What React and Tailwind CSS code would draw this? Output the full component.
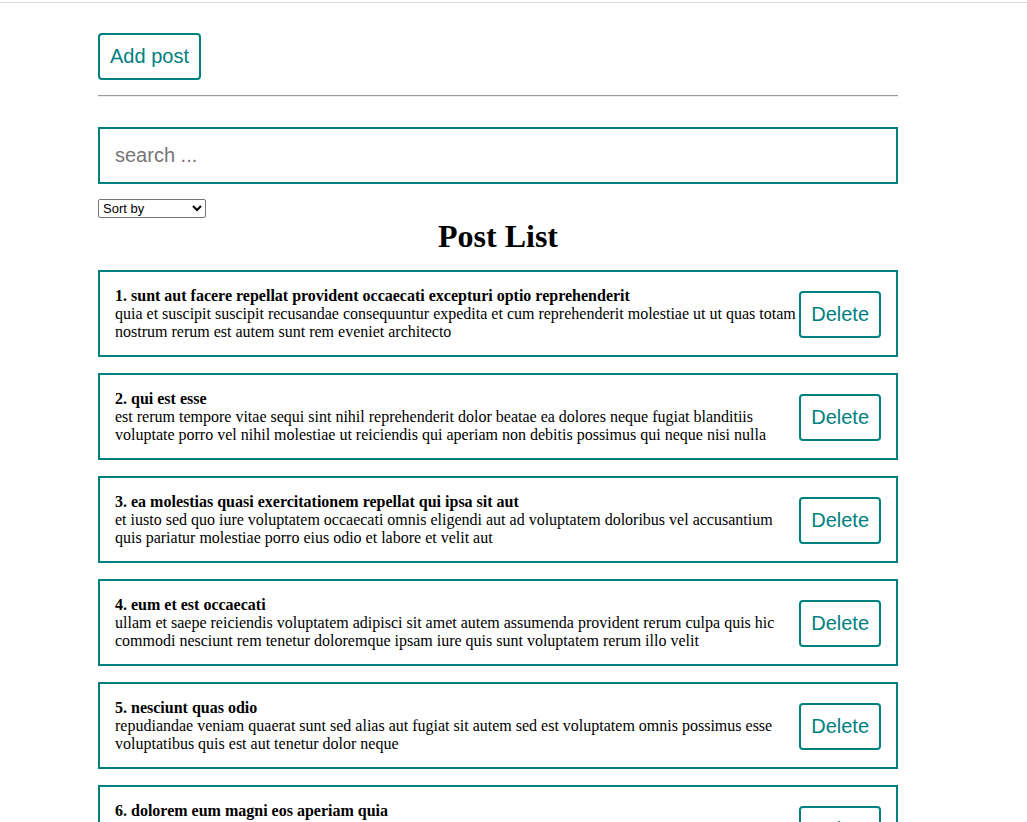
import React, { useState } from 'react';

const posts = [
  {
    id: 1,
    title: 'sunt aut facere repellat provident occaecati excepturi optio reprehenderit',
    body: 'quia et suscipit suscipit recusandae consequuntur expedita et cum reprehenderit molestiae ut ut quas totam nostrum rerum est autem sunt rem eveniet architecto',
  },
  {
    id: 2,
    title: 'qui est esse',
    body: 'est rerum tempore vitae sequi sint nihil reprehenderit dolor beatae ea dolores neque fugiat blanditiis voluptate porro vel nihil molestiae ut reiciendis qui aperiam non debitis possimus qui neque nisi nulla',
  },
  {
    id: 3,
    title: 'ea molestias quasi exercitationem repellat qui ipsa sit aut',
    body: 'et iusto sed quo iure voluptatem occaecati omnis eligendi aut ad voluptatem doloribus vel accusantium quis pariatur molestiae porro eius odio et labore et velit aut',
  },
  {
    id: 4,
    title: 'eum et est occaecati',
    body: 'ullam et saepe reiciendis voluptatem adipisci sit amet autem assumenda provident rerum culpa quis hic commodi nesciunt rem tenetur doloremque ipsam iure quis sunt voluptatem rerum illo velit',
  },
  {
    id: 5,
    title: 'nesciunt quas odio',
    body: 'repudiandae veniam quaerat sunt sed alias aut fugiat sit autem sed est voluptatem omnis possimus esse voluptatibus quis est aut tenetur dolor neque',
  },
  {
    id: 6,
    title: 'dolorem eum magni eos aperiam quia',
    body: 'ut aspernatur corporis harum nihil quis provident sequi mollitia nobis aliquid molestiae perspiciatis et ea nemo ab reprehenderit accusantium quas voluptate dolores velit et doloremque molestiae',
  },
];

// кнопка в стиле teal-outline
const OutlineButton = ({ children, onClick }) => (
  <button
    onClick={onClick}
    className="shrink-0 border-2 border-[#008080] rounded-[4px] bg-white px-[10px] py-[10px] text-[20px] leading-[23px] text-[#008080] font-['Liberation_Sans',Arial,sans-serif] cursor-pointer"
  >
    {children}
  </button>
);

const PostItem = ({ post, number, onDelete }) => (
  <div className="flex items-center mb-[16px] border-2 border-[#008080] pl-[15px] pr-[15px] pt-[15px] pb-[14px]">
    <div className="flex-1 text-[16px] leading-[18px] text-black">
      <strong>{number}. {post.title}</strong>
      <div>{post.body}</div>
    </div>
    <OutlineButton onClick={() => onDelete(post.id)}>Delete</OutlineButton>
  </div>
);

export default function App() {
  const [list, setList] = useState(posts);
  const [query, setQuery] = useState('');
  const [sort, setSort] = useState('');

  const removePost = (id) => setList(prev => prev.filter(p => p.id !== id));

  return (
    <div className="min-h-screen bg-white font-['Liberation_Serif','Times_New_Roman',serif]">
      <div className="h-[2px]" />
      <div className="h-px bg-[#dcdcdc]" />
      <div className="ml-[98px] w-[800px] pt-[30px]">
        <OutlineButton>Add post</OutlineButton>

        <div className="mt-[15px] border-t border-[#9a9a9a] border-b border-b-[#eeeeee] h-[2px]" />

        <input
          value={query}
          onChange={e => setQuery(e.target.value)}
          placeholder="search ..."
          className="mt-[30px] block w-full h-[57px] border-2 border-[#008080] px-[15px] text-[20px] text-black placeholder:text-[#767676] outline-none font-['Liberation_Sans',Arial,sans-serif]"
        />

        <select
          value={sort}
          onChange={e => setSort(e.target.value)}
          className="mt-[15px] block w-[108px] h-[19px] border border-[#767676] rounded-[2px] text-[13px] leading-[15px] text-black bg-white font-['Liberation_Sans',Arial,sans-serif]"
        >
          <option value="" disabled>Sort by</option>
          <option value="title">By title</option>
          <option value="body">By body</option>
        </select>

        <h1 className="text-center text-[32px] font-bold leading-[37px] text-black">Post List</h1>

        <div className="mt-[15px]">
          {list.map((p, i) => (
            <PostItem key={p.id} post={p} number={i + 1} onDelete={removePost} />
          ))}
        </div>
      </div>
    </div>
  );
}
